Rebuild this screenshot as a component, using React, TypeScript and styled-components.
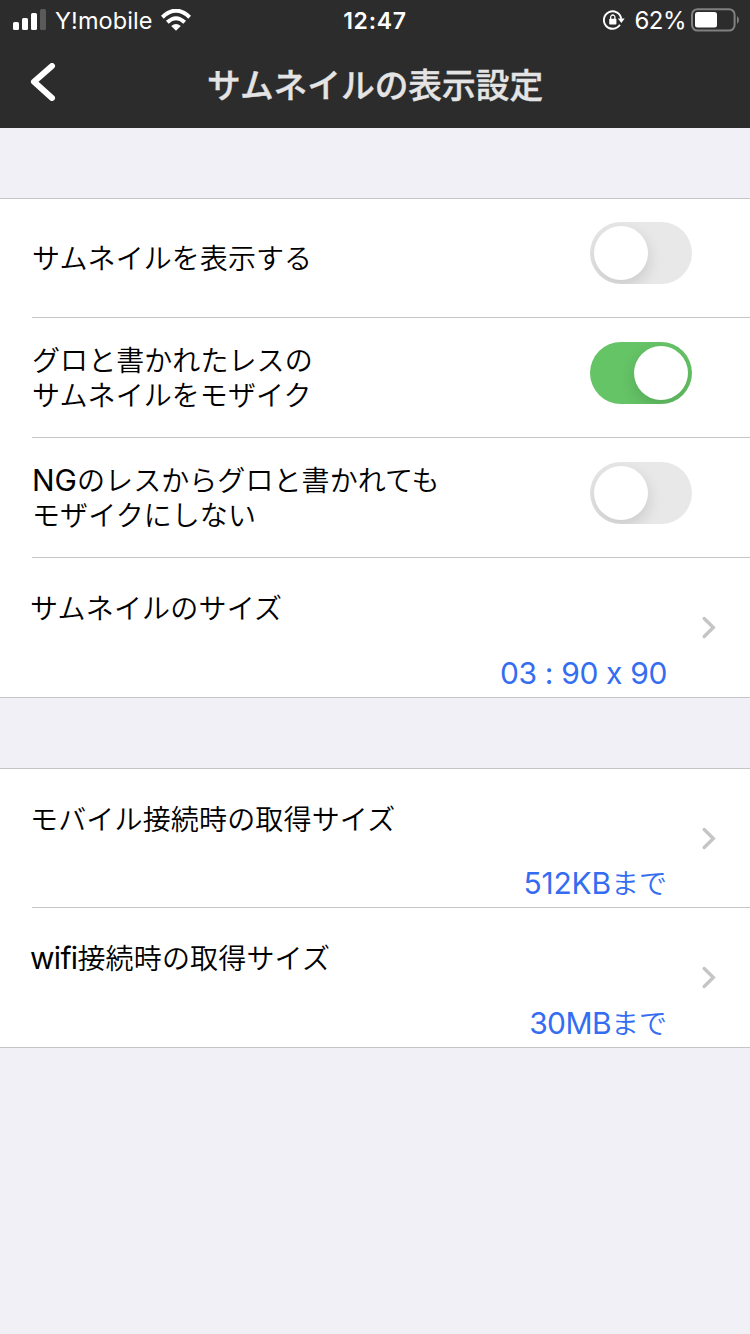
import React from "react";
import styled, { createGlobalStyle } from "styled-components";

const GlobalStyle = createGlobalStyle`
  * { box-sizing: border-box; }
  body {
    margin: 0;
    background: #f0f0f6;
    font-family: Inter, "Noto Sans CJK JP", sans-serif;
    font-feature-settings: "calt" 0;
  }
`;

const Screen = styled.main`
  width: 750px;
  min-height: 1334px;
  background: #f0f0f6;
`;

const Header = styled.header`
  height: 128px;
  background: #2c2c2c;
  color: #fff;
`;

const StatusBar = styled.div`
  display: grid;
  grid-template-columns: 1fr auto 1fr;
  align-items: center;
  height: 40px;
  padding: 0 11px 0 13px;
`;

const StatusSide = styled.div<{ $end?: boolean }>`
  display: flex;
  align-items: center;
  justify-content: ${(p) => (p.$end ? "flex-end" : "flex-start")};
  svg { display: block; flex: none; }
`;

const Carrier = styled.span`
  margin: 1px 8px 0 8px;
  font-size: 23.5px;
  line-height: 30px;
  letter-spacing: 0.1px;
`;

const Clock = styled.time`
  margin: 1px 2px 0 0;
  font-size: 23px;
  font-weight: 600;
  line-height: 30px;
  letter-spacing: 0.75px;
`;

const BatteryLevel = styled.span`
  margin: 1px 5px 0 9px;
  font-size: 24px;
  line-height: 30px;
  letter-spacing: -0.5px;
`;

const NavBar = styled.div`
  display: grid;
  grid-template-columns: 80px 1fr 80px;
  align-items: start;
  height: 88px;
`;

const BackButton = styled.button`
  padding: 23px 0 0 30px;
  border: 0;
  background: none;
  text-align: left;
  svg { display: block; }
`;

const Title = styled.h1`
  margin: 0;
  padding-top: 22px;
  color: #e4e4e4;
  font-size: 33.7px;
  font-weight: 500;
  line-height: 48px;
  text-align: center;
  white-space: nowrap;
  -webkit-text-stroke: 0.4px #e4e4e4;
`;

const Group = styled.section`
  margin-top: 70px;
  border-top: 1px solid #c5c5c8;
  border-bottom: 1px solid #c5c5c8;
  background: #fff;
`;

const Row = styled.div<{ $height: number }>`
  display: flex;
  height: ${(p) => p.$height}px;
  margin-left: 32px;
  border-bottom: 1px solid #c5c5c8;
  &:last-child { border-bottom: 0; }
`;

const ToggleLabel = styled.div`
  flex: 1;
  align-self: center;
  padding-top: 2px;
  color: #000;
  font-size: 28px;
  font-weight: 350;
  line-height: 35px;
  letter-spacing: 0.07px;
`;

const LabelLine = styled.div`
  height: 35px;
`;

const Latin = styled.span<{ $spacing?: number }>`
  font-size: 30px;
  font-weight: 400;
  line-height: 1;
  letter-spacing: ${(p) => p.$spacing ?? 0}px;
`;

const Switch = styled.button<{ $on: boolean; $top: number }>`
  display: flex;
  justify-content: ${(p) => (p.$on ? "flex-end" : "flex-start")};
  width: 102px;
  height: 62px;
  margin: ${(p) => p.$top}px 58px 0 0;
  padding: 4px;
  border: 0;
  border-radius: 31px;
  background: ${(p) => (p.$on ? "#65c466" : "#e8e8e8")};
  overflow: hidden;
`;

const Knob = styled.span`
  width: 54px;
  height: 54px;
  border-radius: 50%;
  background: #fff;
  box-shadow: 0 6px 16px rgba(0, 0, 0, 0.14);
`;

const Detail = styled.div`
  flex: 1;
  display: flex;
  flex-direction: column;
  justify-content: space-between;
  margin-left: -2px;
  padding: 33px 0 5px;
`;

const DetailLabel = styled.div`
  color: #000;
  font-size: 28px;
  font-weight: 350;
  line-height: 36px;
  letter-spacing: 0.17px;
`;

const DetailValue = styled.div`
  color: #346df1;
  font-size: 28px;
  font-weight: 350;
  line-height: 36px;
  text-align: right;
`;

const Disclosure = styled.div`
  display: flex;
  align-items: flex-start;
  width: 83px;
  padding: 57px 0 0 34px;
`;

const Chevron = () => (
  <Disclosure>
    <svg width="16" height="24" viewBox="0 0 16 24" fill="none" stroke="#c5c5c7" strokeWidth="3.4" strokeLinecap="round" strokeLinejoin="miter">
      <path d="M3.2 3.5 L12.3 12.5 L3.2 21.5" />
    </svg>
  </Disclosure>
);

const SignalIcon = () => (
  <svg width="34" height="22" viewBox="0 0 34 22" fill="#fff">
    <rect x="0" y="13" width="6" height="8" rx="1.5" />
    <rect x="9" y="9" width="6" height="12" rx="1.5" />
    <rect x="18" y="4" width="6" height="17" rx="1.5" />
    <rect x="27" y="0" width="6" height="21" rx="1.5" opacity="0.22" />
  </svg>
);

const WifiIcon = () => (
  <svg width="30" height="22" viewBox="0 0 30 22" fill="none" stroke="#fff">
    <path d="M1.3 8.2 Q15 -4.8 28.7 8.2" strokeWidth="4" />
    <path d="M6.3 13.3 Q15 5.2 23.7 13.3" strokeWidth="4" />
    <path d="M10.2 17 Q15 12.8 19.8 17 L15 21.8 Z" fill="#fff" stroke="none" />
  </svg>
);

const RotationLockIcon = () => (
  <svg width="22" height="20" viewBox="0 0 22 20" fill="none" stroke="#fff">
    <path d="M16.9 14.8 A8.7 8.7 0 1 1 18.2 8.8" strokeWidth="1.9" />
    <path d="M14.9 8.6 H21.7 L18.3 13 Z" fill="#fff" stroke="none" />
    <rect x="6.2" y="8.8" width="7.2" height="5.8" rx="0.8" fill="#fff" stroke="none" />
    <path d="M7.7 9 V7.1 A2.1 2.1 0 0 1 11.9 7.1 V9" strokeWidth="1.3" />
  </svg>
);

const BatteryIcon = () => (
  <svg width="48" height="24" viewBox="0 0 48 24">
    <rect x="1" y="1.2" width="42.6" height="21.4" rx="5.5" fill="none" stroke="#808080" strokeWidth="2" />
    <rect x="4" y="4" width="22" height="15.5" rx="2.5" fill="#fff" />
    <path d="M46 8 Q48 9.5 48 12 Q48 14.5 46 16 Z" fill="#808080" />
  </svg>
);

interface ToggleRowProps {
  height?: number;
  on?: boolean;
  lines: React.ReactNode[];
}

const ToggleRow = ({ height = 120, on = false, lines }: ToggleRowProps) => (
  <Row $height={height}>
    <ToggleLabel>
      {lines.map((line, i) => (
        <LabelLine key={i}>{line}</LabelLine>
      ))}
    </ToggleLabel>
    <Switch type="button" role="switch" aria-checked={on} $on={on} $top={height - 96}>
      <Knob />
    </Switch>
  </Row>
);

interface DetailRowProps {
  height: number;
  label: React.ReactNode;
  value: React.ReactNode;
}

const DetailRow = ({ height, label, value }: DetailRowProps) => (
  <Row $height={height}>
    <Detail>
      <DetailLabel>{label}</DetailLabel>
      <DetailValue>{value}</DetailValue>
    </Detail>
    <Chevron />
  </Row>
);

export default function App() {
  return (
    <Screen lang="ja">
      <GlobalStyle />
      <Header>
        <StatusBar>
          <StatusSide>
            <SignalIcon />
            <Carrier>Y!mobile</Carrier>
            <WifiIcon />
          </StatusSide>
          <Clock>12:47</Clock>
          <StatusSide $end>
            <RotationLockIcon />
            <BatteryLevel>62%</BatteryLevel>
            <BatteryIcon />
          </StatusSide>
        </StatusBar>
        <NavBar>
          <BackButton type="button" aria-label="戻る">
            <svg width="26" height="38" viewBox="0 0 26 38" fill="none" stroke="#fff" strokeWidth="6" strokeLinecap="round" strokeLinejoin="round">
              <path d="M22 3 L4 18.8 L22 35" />
            </svg>
          </BackButton>
          <Title>サムネイルの表示設定</Title>
        </NavBar>
      </Header>
      <Group>
        <ToggleRow height={119} lines={["サムネイルを表示する"]} />
        <ToggleRow on lines={["グロと書かれたレスの", "サムネイルをモザイク"]} />
        <ToggleRow lines={[<><Latin>NG</Latin>のレスからグロと書かれても</>, "モザイクにしない"]} />
        <DetailRow height={139} label="サムネイルのサイズ" value={<Latin $spacing={-0.35}>03 : 90 x 90</Latin>} />
      </Group>
      <Group>
        <DetailRow height={139} label="モバイル接続時の取得サイズ" value={<><Latin $spacing={-0.2}>512KB</Latin>まで</>} />
        <DetailRow height={139} label={<><Latin $spacing={-0.7}>wifi</Latin>接続時の取得サイズ</>} value={<><Latin $spacing={-0.6}>30MB</Latin>まで</>} />
      </Group>
    </Screen>
  );
}
